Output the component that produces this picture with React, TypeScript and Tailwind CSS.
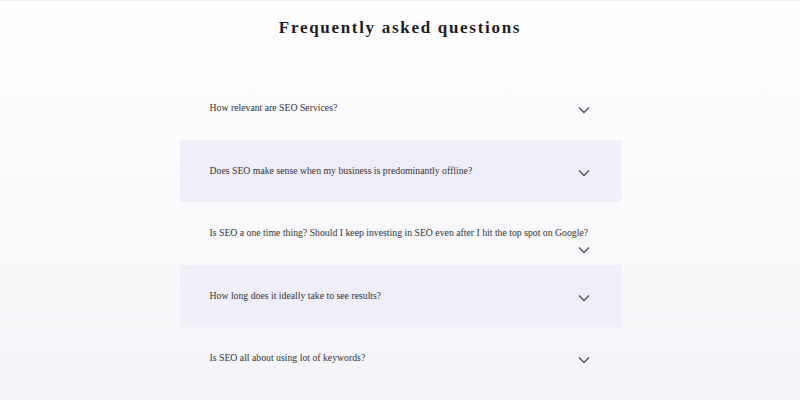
import React from "react";

const questions = [
  "How relevant are SEO Services?",
  "Does SEO make sense when my business is predominantly offline?",
  "Is SEO a one time thing? Should I keep investing in SEO even after I hit the top spot on Google?",
  "How long does it ideally take to see results?",
  "Is SEO all about using lot of keywords?",
];

function Chevron() {
  return (
    <svg width="12" height="8" viewBox="0 0 12 8" className="ml-auto mt-[6px] shrink-0" fill="none">
      <path d="M1 1.5 L6 6.5 L11 1.5" stroke="#4b5563" strokeWidth="1.4" />
    </svg>
  );
}

export default function App() {
  return (
    <div className="h-[400px] w-[800px] overflow-hidden border-t border-[#f3f3f3] bg-gradient-to-b from-white to-[#f4f4f8] font-['Liberation_Serif','Times_New_Roman',serif]">
      <h1 className="pt-[14px] text-center text-[17px] font-bold leading-[26px] tracking-[1.7px] text-[#1c1c24]">
        Frequently asked questions
      </h1>
      <div className="mx-auto mt-[36px] w-[441px]">
        {questions.map((q, i) => (
          <div
            key={q}
            className={
              "h-[62.5px] pl-[30px] pr-[31px] pt-[23px] " + (i % 2 === 1 ? "bg-[#f0eef9]" : "")
            }
          >
            <div className="flex flex-wrap items-start">
              <span className="pt-[1px] text-[9.75px] leading-[14px] text-[#333333]">{q}</span>
              <Chevron />
            </div>
          </div>
        ))}
      </div>
    </div>
  );
}
